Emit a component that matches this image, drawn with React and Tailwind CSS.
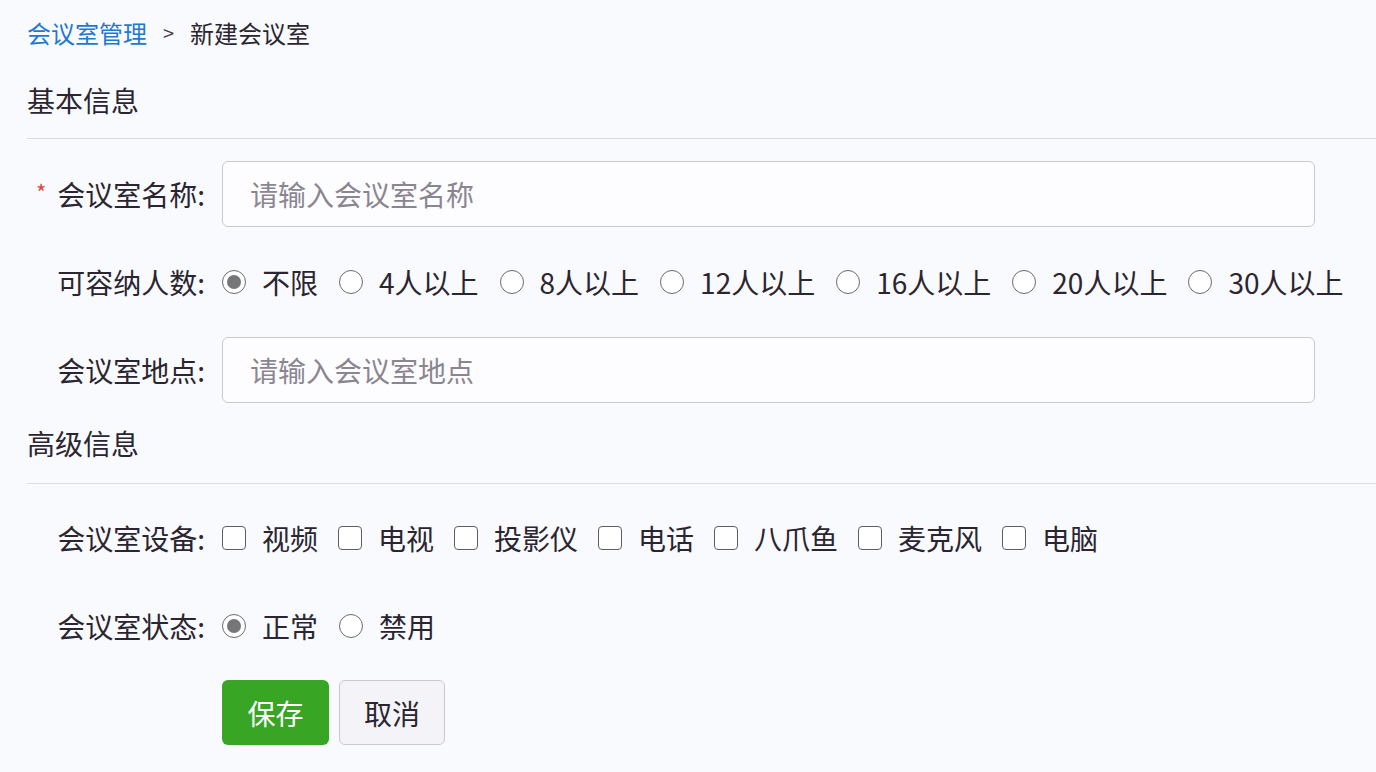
import React from 'react';

const capacityOptions = ['不限', '4人以上', '8人以上', '12人以上', '16人以上', '20人以上', '30人以上'];
const equipment = ['视频', '电视', '投影仪', '电话', '八爪鱼', '麦克风', '电脑'];
const statusOptions = ['正常', '禁用'];

function Radio({ checked, label }) {
  return (
    <label className="flex items-center mr-[21px]">
      <span className="w-[24px] h-[24px] rounded-full border-[1.5px] border-[#6b6b70] bg-white flex items-center justify-center">
        {checked && <span className="w-[14px] h-[14px] rounded-full bg-[#767679]" />}
      </span>
      <span className="ml-[16px]">{label}</span>
    </label>
  );
}

function Checkbox({ label }) {
  return (
    <label className="flex items-center mr-[20px]">
      <span className="w-[24px] h-[24px] rounded-[4px] border-[1.5px] border-[#5e5e63] bg-white" />
      <span className="ml-[16px]">{label}</span>
    </label>
  );
}

function FieldLabel({ children, required }) {
  return (
    <div className="w-[178px] shrink-0 flex items-center justify-end">
      {required && <span className="text-[#e0443e] text-[22px] mr-[11px] relative top-[-3px]">*</span>}
      <span>{children}:</span>
    </div>
  );
}

export default function App() {
  return (
    <div
      className="w-full h-[772px] bg-[#f9fafd] text-[#2a2530] text-[28px] overflow-hidden"
      style={{ fontFamily: '"Noto Sans CJK SC", "Noto Sans", sans-serif' }}
    >
      <div className="pl-[27px]">
        {/* Breadcrumb */}
        <div className="h-[66px] flex items-center text-[24px] leading-[32px]">
          <span className="text-[#1f78d1]">会议室管理</span>
          <span className="mx-[16px] text-[20px] text-[#444]">&gt;</span>
          <span>新建会议室</span>
        </div>

        {/* Basic info */}
        <div className="h-[40px] leading-[40px] mt-[14px]">基本信息</div>
        <div className="border-b border-[#dcdde2] mt-[18px]" />

        <div className="flex items-center mt-[22px]">
          <FieldLabel required>会议室名称</FieldLabel>
          <div className="ml-[17px] w-[1093px] h-[66px] rounded-[6px] border border-[#c9c9cf] bg-[#fdfdff] flex items-center pl-[27px] text-[#8a8690]">
            请输入会议室名称
          </div>
        </div>

        <div className="flex items-center mt-[35px] h-[40px]">
          <FieldLabel>可容纳人数</FieldLabel>
          <div className="ml-[17px] flex items-center">
            {capacityOptions.map((opt, i) => (
              <Radio key={opt} label={opt} checked={i === 0} />
            ))}
          </div>
        </div>

        <div className="flex items-center mt-[35px]">
          <FieldLabel>会议室地点</FieldLabel>
          <div className="ml-[17px] w-[1093px] h-[66px] rounded-[6px] border border-[#c9c9cf] bg-[#fdfdff] flex items-center pl-[27px] text-[#8a8690]">
            请输入会议室地点
          </div>
        </div>

        {/* Advanced info */}
        <div className="h-[40px] leading-[40px] mt-[20px]">高级信息</div>
        <div className="border-b border-[#dcdde2] mt-[20px]" />

        <div className="flex items-center mt-[34px] h-[40px]">
          <FieldLabel>会议室设备</FieldLabel>
          <div className="ml-[17px] flex items-center">
            {equipment.map((item) => (
              <Checkbox key={item} label={item} />
            ))}
          </div>
        </div>

        <div className="flex items-center mt-[48px] h-[40px]">
          <FieldLabel>会议室状态</FieldLabel>
          <div className="ml-[17px] flex items-center">
            {statusOptions.map((opt, i) => (
              <Radio key={opt} label={opt} checked={i === 0} />
            ))}
          </div>
        </div>

        <div className="flex items-center mt-[34px] ml-[195px]">
          <button className="w-[107px] h-[65px] rounded-[6px] bg-[#38a524] text-white text-[28px] flex items-center justify-center">
            保存
          </button>
          <button className="ml-[10px] w-[106px] h-[65px] rounded-[6px] border border-[#c9c9cf] bg-[#f4f4f8] text-[#2a2530] text-[28px] flex items-center justify-center">
            取消
          </button>
        </div>
      </div>
    </div>
  );
}
